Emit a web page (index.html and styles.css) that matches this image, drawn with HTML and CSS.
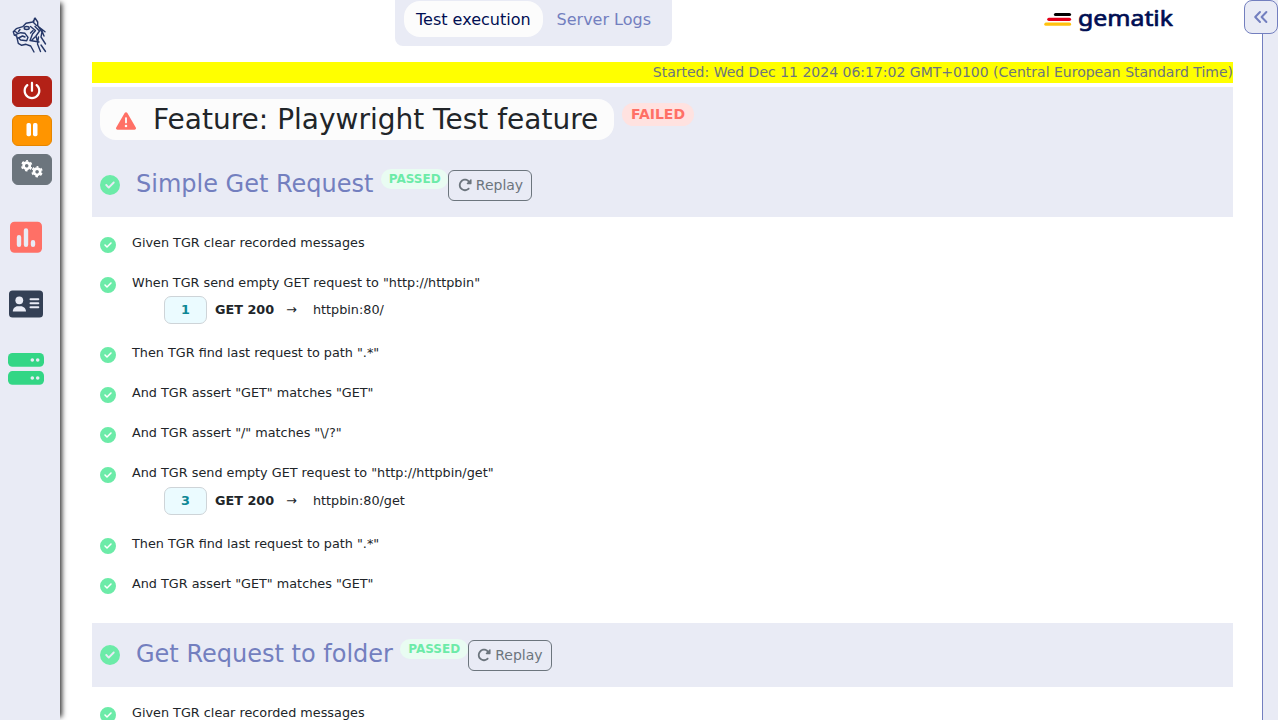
FILE: index.html
```html
<!DOCTYPE html>
<html lang="en">
<head>
<meta charset="utf-8">
<title>Tiger Workflow UI</title>
<link rel="stylesheet" href="styles.css">
</head>
<body>
<svg class="defs" width="0" height="0">
  <symbol id="check" viewBox="0 0 512 512"><path d="M256 512A256 256 0 1 0 256 0a256 256 0 1 0 0 512zM369 209L241 337c-9.400 9.400-24.600 9.400-33.900 0l-64-64c-9.400-9.400-9.400-24.600 0-33.900s24.600-9.400 33.900 0l47 47L335 175c9.400-9.400 24.600-9.400 33.900 0s9.400 24.600 0 33.900z"/></symbol>
  <symbol id="rotate" viewBox="0 0 512 512"><path d="M463.500 224H472c13.300 0 24-10.700 24-24V72c0-9.700-5.800-18.500-14.800-22.200s-19.300-1.700-26.200 5.200L413.400 96.600c-87.600-86.500-228.700-86.200-315.800 1c-87.500 87.500-87.500 229.300 0 316.800s229.300 87.500 316.800 0c12.500-12.500 12.500-32.800 0-45.300s-32.800-12.500-45.300 0c-62.500 62.500-163.800 62.500-226.300 0s-62.500-163.800 0-226.300c62.200-62.200 162.700-62.500 225.300-1L327 183c-6.900 6.900-8.900 17.200-5.200 26.200s12.500 14.800 22.200 14.800H463.500z"/></symbol>
  <symbol id="cog" viewBox="-6 -6 12 12"><circle r="3" fill="none" stroke="#fff" stroke-width="2.600"/><circle r="4.700" fill="none" stroke="#fff" stroke-width="1.600" stroke-dasharray="2.500 2.422" stroke-dashoffset="1.250" transform="rotate(-90)"/></symbol>
</svg>
<div class="app">
  <aside class="sidebar">
    <svg class="tiger" width="36" height="38" viewBox="0 0 36 38">
      <path d="M1.300 15.700 4.300 12.700 10.700 10.700 14 7.300 20.700 6 23 2 25.700 6 25.700 10 33 15.700M1.300 15.700 2.300 19 4.700 20M22.500 2.500 21.500 6.500 24.500 9.500M4 18.300 8.700 16.700 13 17.300 16 21.300 14.700 24.700 8.700 24 6.300 21.700M3 15.500 5.500 17M4.700 20.500 6.300 27.300 9.700 29.300 14 28.300 18.700 30 22 36M7.500 21.500 10.500 20 13 21M18.500 10.500 23.500 14.500 20.500 18 18 24.500 27 26M23 10.500 27.500 15 24 20 25 24M26 10 30 16 29 21 33.500 28M30 15 32 20M26.500 21 25.500 28 28.500 35.500M29 29 33.500 35.500M18.500 17 21 14.500M8 13.500 6.500 15.500M20 24 23 21"/><ellipse cx="14.700" cy="12" rx="2.500" ry="1.500"/>
    </svg>
    <div class="actions">
      <button class="act quit"><svg width="20" height="20" viewBox="0 0 512 512"><path fill="#fff" d="M288 32c0-17.700-14.300-32-32-32s-32 14.300-32 32V256c0 17.700 14.300 32 32 32s32-14.300 32-32V32zM143.500 120.600c13.600-11.300 15.400-31.500 4.100-45.100s-31.500-15.400-45.100-4.100C49.700 115.400 16 181.800 16 256c0 132.500 107.500 240 240 240s240-107.500 240-240c0-74.200-33.800-140.600-86.600-184.600c-13.600-11.300-33.800-9.400-45.100 4.100s-9.400 33.800 4.100 45.100c38.900 32.300 63.500 81 63.500 135.400c0 97.200-78.800 176-176 176s-176-78.800-176-176c0-54.400 24.700-103.100 63.500-135.400z" transform="translate(25 20) scale(.9)"/></svg></button>
      <button class="act pause"><svg width="12" height="14" viewBox="0 0 12 14"><rect x=".5" width="4.500" height="13.300" rx="1.700" fill="#fff"/><rect x="7" width="4.500" height="13.300" rx="1.700" fill="#fff"/></svg></button>
      <button class="act config"><svg width="24" height="20" viewBox="0 0 24 20"><use href="#cog" x=".5" y=".5" width="12.400" height="12.400"/><use href="#cog" x="10.900" y="6.500" width="12.400" height="12.400"/></svg></button>
    </div>
    <svg class="poll" width="32" height="32" viewBox="0 0 32 32"><rect width="32" height="31" y=".7" rx="4.500" fill="#ff7066"/><path d="M9 16.300v7.500M16 9.500v14.300M23 21.300v2.500" stroke="#e9ebf5" stroke-width="4.400" stroke-linecap="round"/></svg>
    <svg class="card" width="34" height="28" viewBox="0 0 34 28"><rect y=".5" width="34" height="27" rx="3.500" fill="#344055"/><circle cx="10.300" cy="10.300" r="3.900" fill="#e9ebf5"/><path d="M3.800 21.500c0-3 2.200-5.300 5-5.300h3c2.800 0 5.200 2.300 5.200 5.300z" fill="#e9ebf5"/><path d="M21.500 9.200h7.800M21.500 13.200h7.800M21.500 17.200h7.800" stroke="#e9ebf5" stroke-width="2" stroke-linecap="round"/></svg>
    <svg class="server" width="36" height="32" viewBox="0 0 36 32"><rect width="36" height="13.700" rx="4.500" fill="#33d685"/><rect y="18.100" width="36" height="13.700" rx="4.500" fill="#33d685"/><g fill="#e9ebf5"><circle cx="24.300" cy="7" r="1.800"/><circle cx="29.700" cy="7" r="1.800"/><circle cx="24.300" cy="25" r="1.800"/><circle cx="29.700" cy="25" r="1.800"/></g></svg>
  </aside>
  <main class="main">
    <header class="top">
      <nav class="tabs"><span class="tab active">Test execution</span><span class="tab">Server Logs</span></nav>
      <svg class="brand" width="132" height="34" viewBox="0 0 132 34">
        <path d="M11.500 14.500H25.500" stroke="#000"/><path d="M4.800 19.300H25.500" stroke="#e2001a"/><path d="M1.900 24.200H25.500" stroke="#ffc20e"/>
        <text x="34" y="25.700" textLength="95" lengthAdjust="spacingAndGlyphs">gematik</text>
      </svg>
    </header>
    <div class="started">Started: Wed Dec 11 2024 06:17:02 GMT+0100 (Central European Standard Time)</div>
    <section class="feature">
      <div class="title"><svg width="20" height="20" viewBox="0 0 512 512"><path fill="#ff7066" d="M256 32c14.200 0 27.300 7.500 34.500 19.800l216 368c7.300 12.400 7.300 27.700 .2 40.100S486.300 480 472 480H40c-14.300 0-27.600-7.700-34.700-20.100s-7-27.800 .2-40.100l216-368C228.700 39.500 241.800 32 256 32zm0 128c-13.300 0-24 10.700-24 24V296c0 13.300 10.700 24 24 24s24-10.700 24-24V184c0-13.300-10.700-24-24-24zm32 224a32 32 0 1 0 -64 0 32 32 0 1 0 64 0z"/></svg><h1>Feature: Playwright Test feature</h1></div>
      <span class="badge failed">FAILED</span>
    </section>
    <section class="scenario">
      <svg class="ok" width="20" height="20"><use href="#check"/></svg><h2>Simple Get Request</h2><span class="badge passed">PASSED</span>
      <button class="replay"><svg width="14" height="14"><use href="#rotate"/></svg>Replay</button>
    </section>
    <div class="steps">
      <div class="step"><svg class="ok" width="16" height="16"><use href="#check"/></svg><p>Given TGR clear recorded messages</p></div>
      <div class="step"><svg class="ok" width="16" height="16"><use href="#check"/></svg><div><p>When TGR send empty GET request to "http://httpbin"</p><div class="call"><b class="num">1</b><b>GET 200</b><span class="arrow">→</span><span>httpbin:80/</span></div></div></div>
      <div class="step"><svg class="ok" width="16" height="16"><use href="#check"/></svg><p>Then TGR find last request to path ".*"</p></div>
      <div class="step"><svg class="ok" width="16" height="16"><use href="#check"/></svg><p>And TGR assert "GET" matches "GET"</p></div>
      <div class="step"><svg class="ok" width="16" height="16"><use href="#check"/></svg><p>And TGR assert "/" matches "\/?"</p></div>
      <div class="step"><svg class="ok" width="16" height="16"><use href="#check"/></svg><div><p>And TGR send empty GET request to "http://httpbin/get"</p><div class="call second"><b class="num">3</b><b>GET 200</b><span class="arrow">→</span><span>httpbin:80/get</span></div></div></div>
      <div class="step"><svg class="ok" width="16" height="16"><use href="#check"/></svg><p>Then TGR find last request to path ".*"</p></div>
      <div class="step"><svg class="ok" width="16" height="16"><use href="#check"/></svg><p>And TGR assert "GET" matches "GET"</p></div>
    </div>
    <section class="scenario next">
      <svg class="ok" width="20" height="20"><use href="#check"/></svg><h2>Get Request to folder</h2><span class="badge passed">PASSED</span>
      <button class="replay"><svg width="14" height="14"><use href="#rotate"/></svg>Replay</button>
    </section>
    <div class="steps">
      <div class="step"><svg class="ok" width="16" height="16"><use href="#check"/></svg><p>Given TGR clear recorded messages</p></div>
    </div>
  </main>
  <aside class="panel"><button class="toggle"><svg width="16" height="14" viewBox="0 0 16 14"><path d="M7 2 2.200 7 7 12M13.400 2 8.600 7l4.800 5"/></svg></button></aside>
</div>
</body>
</html>
```

FILE: styles.css
```css
* { box-sizing: border-box; }
body { margin: 0; height: 720px; overflow: hidden; background: #fff; color: #212529; font-family: "DejaVu Sans", sans-serif; font-size: 13px; }
h1, h2, p { margin: 0; font-weight: 400; }
svg { display: block; flex: none; }
button { font-family: inherit; padding: 0; margin: 0; }
.defs { position: absolute; }
.app { display: flex; height: 720px; overflow: hidden; }
.sidebar { flex: none; width: 60px; height: 720px; background: #e9ebf5; box-shadow: 5px 0 5px -3px #333; display: flex; flex-direction: column; padding-top: 16px; }
.tiger { margin-left: 12px; fill: none; stroke: #253768; stroke-width: 1.400; stroke-linejoin: round; stroke-linecap: round; }
.actions { display: flex; flex-direction: column; gap: 8px; margin: 22px 0 0 12px; }
.act { width: 40px; height: 31px; border: 1px solid; border-radius: 6px; display: flex; align-items: center; justify-content: center; padding-bottom: 2px; }
.quit { background: #b32117; border-color: #b32117; }
.pause { background: #ff9500; border-color: #e68600; }
.config { background: #6c757d; border-color: #6c757d; }
.poll { margin: 36px 0 0 10px; }
.card { margin: 37px 0 0 9px; }
.server { margin: 35px 0 0 8px; }
.main { width: 1202px; flex: none; padding: 0 29px 0 32px; }
.top { height: 62px; display: flex; align-items: flex-start; }
.tabs { width: 277px; height: 46px; margin-left: 303px; background: #e9ebf5; border-radius: 0 0 8px 8px; padding: 1px 9px; display: flex; }
.tab { height: 36px; padding: 0 12px; line-height: 37px; font-size: 16px; color: #737fbf; border-radius: 16px; white-space: nowrap; }
.tab + .tab { padding-left: 14px; }
.active { background: #fcfcfc; color: #000e52; }
.brand { margin: 0 0 0 372px; fill: none; stroke-width: 3.200; stroke-linecap: round; }
.brand text { fill: #000e52; stroke: #000e52; stroke-width: .7; stroke-linejoin: round; font-family: "Noto Sans", sans-serif; font-weight: 400; font-size: 22.500px; }
.started { height: 21px; background: #ff0; color: #6c757d; text-align: right; font-size: 14px; line-height: 20px; }
.feature { margin-top: 4px; height: 67px; padding: 12px 8px 0; background: #e9ebf5; display: flex; align-items: flex-start; }
.title { width: 514px; height: 41px; border-radius: 16px; background: #fcfcfc; display: flex; padding-left: 16px; }
.title svg { margin-top: 12px; }
.title h1 { font-size: 28px; line-height: 42px; margin-left: 17px; white-space: nowrap; }
.badge { font-weight: 700; border-radius: 12px; text-align: center; }
.failed { width: 72px; height: 23px; margin: 4px 0 0 8px; font-size: 14px; line-height: 23px; color: #ff7066; background: #ffe2e0; }
.passed { width: 67.500px; height: 20px; margin: 15px 0 0 7.500px; font-size: 12px; line-height: 20px; color: #6ceba8; background: #e9fcf2; }
.scenario { height: 63px; padding-left: 8px; background: #e9ebf5; display: flex; align-items: flex-start; }
.ok { fill: #6ceba8; }
.scenario .ok { margin-top: 21px; }
.scenario h2 { font-size: 24px; line-height: 28px; margin: 16px 0 0 16px; color: #737fbf; white-space: nowrap; }
.replay { width: 84px; height: 31px; margin-top: 16px; border: 1px solid #6c757d; border-radius: 6px; background: none; color: #6c757d; font-size: 14px; display: flex; align-items: center; justify-content: center; gap: 4px; padding-bottom: 2px; }
.replay svg { fill: #6c757d; }
.steps { padding: 19px 8px 0; }
.step { display: flex; min-height: 40px; }
.step .ok { margin: 1px 16px 0 0; }
.step p { line-height: 13px; font-size: 12.800px; white-space: nowrap; }
.call { display: flex; align-items: center; height: 28px; margin: 7px 0 22px 32px; font-size: 12.800px; line-height: 15px; }
.call > :not(.num) { padding-bottom: 2px; }
.call.second { margin-top: 8px; }
.num { width: 43px; height: 28px; border: 1px solid #ced4d8; border-radius: 7px; background: #ebfbff; color: #0e8795; text-align: center; line-height: 26px; margin-right: 8px; }
.arrow { margin: 0 16px 0 12px; }
.next { margin-top: 6px; height: 64px; padding-top: 1px; }
.panel { flex: none; width: 16px; background: #e9ebf5; border-left: 1px solid #737fbf; }
.toggle { position: relative; left: -19px; width: 34px; height: 34px; border: 1px solid #737fbf; border-radius: 8px; background: #e9ebf5; display: flex; align-items: center; justify-content: center; }
.toggle path { fill: none; stroke: #737fbf; stroke-width: 2; stroke-linecap: round; stroke-linejoin: round; }
```
